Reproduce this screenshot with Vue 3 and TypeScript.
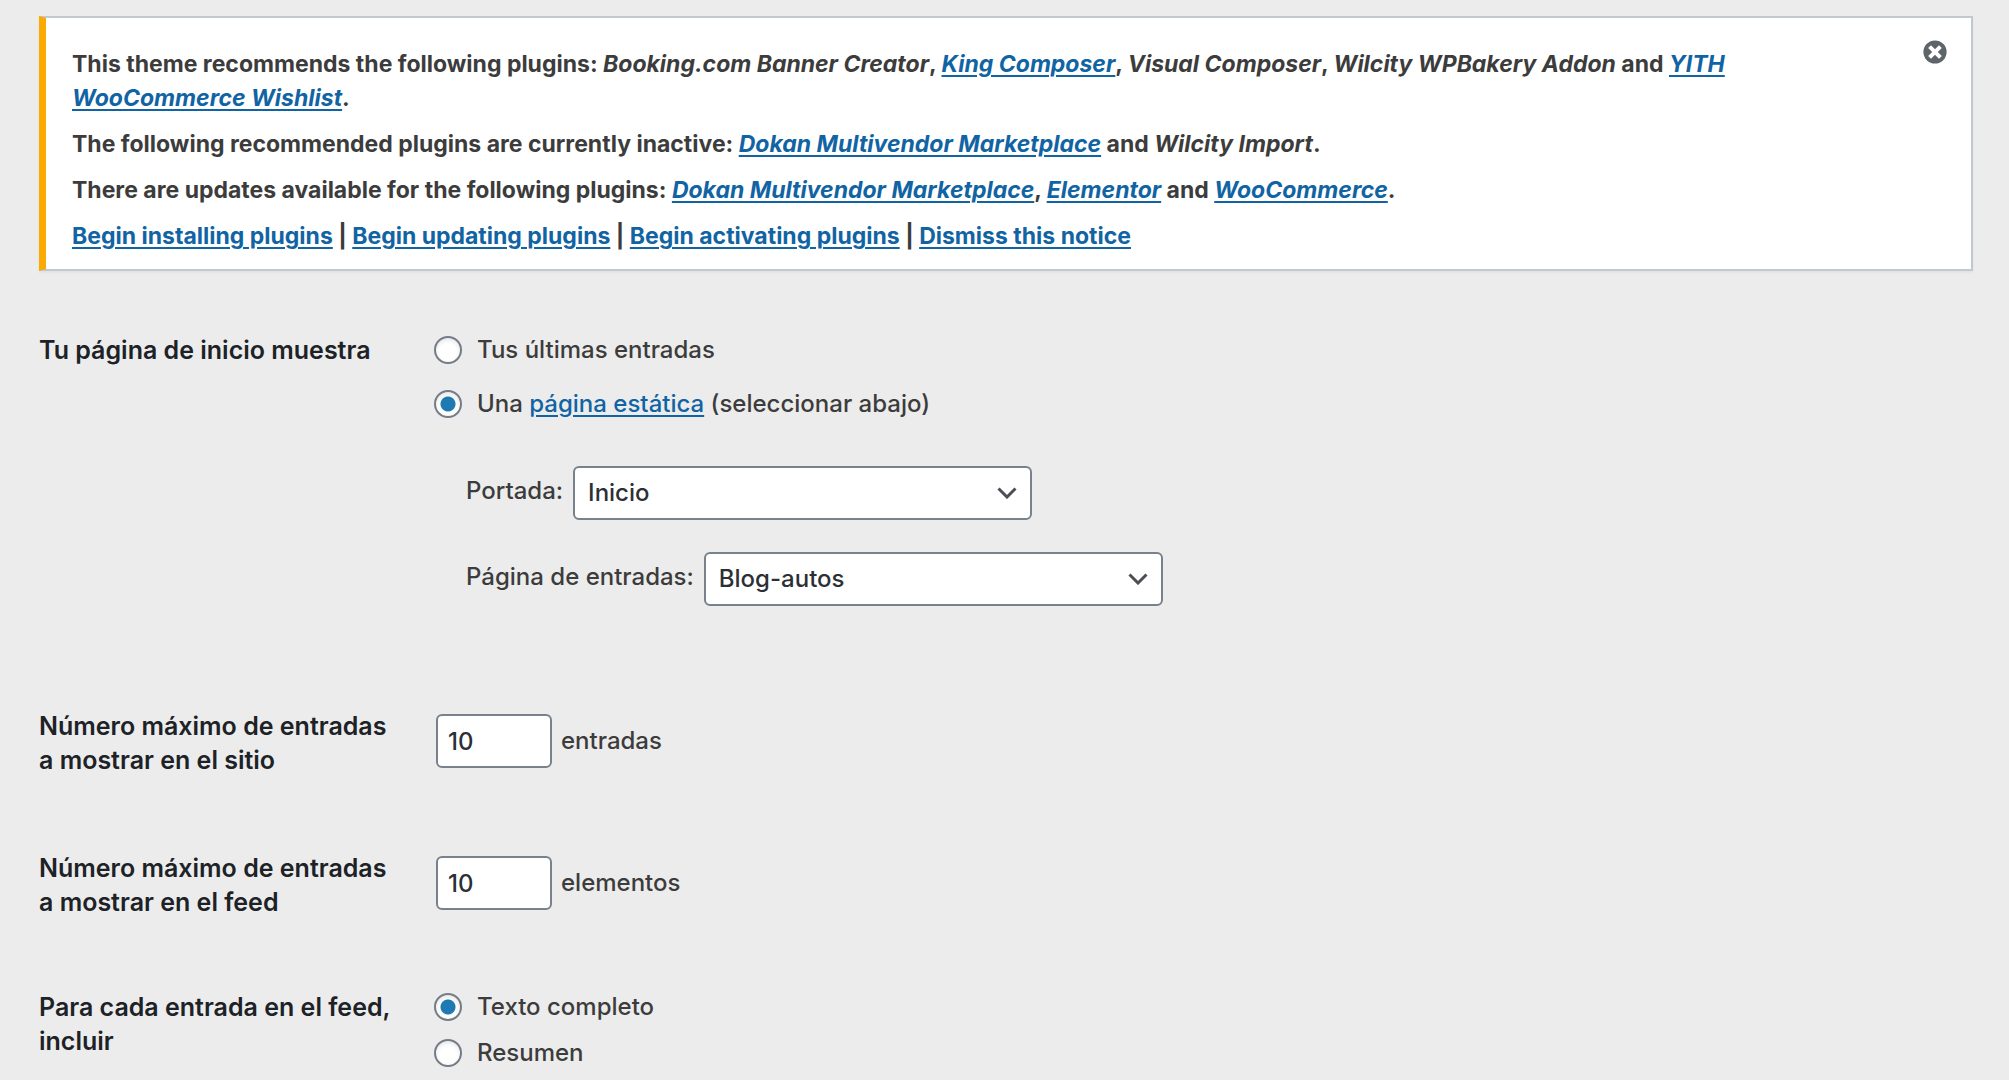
<script setup lang="ts">
import { ref } from 'vue'

const noticeVisible = ref(true)
const showOnFront = ref<'posts' | 'page'>('page')
const frontPage = ref('Inicio')
const postsPage = ref('Blog-autos')
const postsPerPage = ref('10')
const postsPerFeed = ref('10')
const feedContent = ref<'full' | 'excerpt'>('full')
</script>

<template>
  <main class="page">
    <section v-if="noticeVisible" class="notice">
      <div class="notice-text">
        <p>
          This theme recommends the following plugins: <em>Booking.com Banner Creator</em>,
          <em><a href="#">King Composer</a></em>, <em>Visual Composer</em>,
          <em>Wilcity WPBakery Addon</em> and <em><a href="#">YITH WooCommerce Wishlist</a></em>.
        </p>
        <p>
          The following recommended plugins are currently inactive:
          <em><a href="#">Dokan Multivendor Marketplace</a></em> and <em>Wilcity Import</em>.
        </p>
        <p>
          There are updates available for the following plugins:
          <em><a href="#">Dokan Multivendor Marketplace</a></em>,
          <em><a href="#">Elementor</a></em> and <em><a href="#">WooCommerce</a></em>.
        </p>
        <p>
          <a href="#">Begin installing plugins</a> | <a href="#">Begin updating plugins</a> |
          <a href="#">Begin activating plugins</a> | <a href="#">Dismiss this notice</a>
        </p>
      </div>
      <button class="dismiss" type="button" aria-label="Descartar este aviso" @click="noticeVisible = false">
        <svg viewBox="0 0 24 24" width="24" height="24" aria-hidden="true">
          <circle cx="12" cy="12" r="11.6" fill="#5f6469" />
          <path d="M6.600 6.600l10.800 10.800M17.400 6.600l-10.800 10.800" stroke="#fff" stroke-width="4" />
        </svg>
      </button>
    </section>

    <form class="settings" @submit.prevent>
      <div class="row row-home" role="radiogroup" aria-labelledby="home-title">
        <div id="home-title" class="title">Tu página de inicio muestra</div>
        <div class="field">
          <div class="radios spaced">
            <label class="choice">
              <input v-model="showOnFront" type="radio" name="front" value="posts" />
              <span>Tus últimas entradas</span>
            </label>
            <label class="choice">
              <input v-model="showOnFront" type="radio" name="front" value="page" />
              <span>Una <a href="#">página estática</a> (seleccionar abajo)</span>
            </label>
          </div>
          <div class="pages">
            <div class="pick">
              <label for="front-page">Portada:</label>
              <span class="select">
                <select id="front-page" v-model="frontPage">
                  <option>Inicio</option>
                </select>
                <svg viewBox="0 0 20 12" width="20" height="12" aria-hidden="true">
                  <path d="M1.5 1.5L10 10l8.500-8.500" fill="none" stroke="#4b4f54" stroke-width="3" />
                </svg>
              </span>
            </div>
            <div class="pick">
              <label for="posts-page">Página de entradas:</label>
              <span class="select">
                <select id="posts-page" v-model="postsPage">
                  <option>Blog-autos</option>
                </select>
                <svg viewBox="0 0 20 12" width="20" height="12" aria-hidden="true">
                  <path d="M1.5 1.5L10 10l8.500-8.500" fill="none" stroke="#4b4f54" stroke-width="3" />
                </svg>
              </span>
            </div>
          </div>
        </div>
      </div>

      <div class="counts">
        <div class="row">
          <label class="title" for="site-count">Número máximo de entradas a mostrar en el sitio</label>
          <div class="field count">
            <input id="site-count" v-model="postsPerPage" type="text" inputmode="numeric" />
            <span>entradas</span>
          </div>
        </div>

        <div class="row">
          <label class="title" for="feed-count">Número máximo de entradas a mostrar en el feed</label>
          <div class="field count">
            <input id="feed-count" v-model="postsPerFeed" type="text" inputmode="numeric" />
            <span>elementos</span>
          </div>
        </div>
      </div>

      <div class="row" role="radiogroup" aria-labelledby="feed-title">
        <div id="feed-title" class="title">Para cada entrada en el feed, incluir</div>
        <div class="field radios">
          <label class="choice">
            <input v-model="feedContent" type="radio" name="feed" value="full" />
            <span>Texto completo</span>
          </label>
          <label class="choice">
            <input v-model="feedContent" type="radio" name="feed" value="excerpt" />
            <span>Resumen</span>
          </label>
        </div>
      </div>
    </form>
  </main>
</template>

<style>
body {
  margin: 0;
  background: #ececec;
}
</style>

<style scoped>
.page {
  box-sizing: border-box;
  padding: 16px 36px 0 39px;
  font-family: Inter, "Liberation Sans", sans-serif;
  font-size: 24px;
  font-weight: 450;
  line-height: 34px;
  color: #3c3c3c;
}

a {
  color: #1164a3;
  text-decoration: underline;
  text-decoration-thickness: 2px;
  text-underline-offset: 3px;
}

.notice {
  display: flex;
  align-items: flex-start;
  justify-content: space-between;
  padding: 29px 24px 16px 26px;
  background: #fff;
  border: 2px solid #c3c8cd;
  border-left: 7px solid #fbab00;
  box-shadow: 0 2px 2px rgba(0, 0, 0, 0.04);
  font-size: 23px;
  font-weight: 650;
}

.notice-text {
  flex: 1;
  max-width: 1720px;
}

.notice p {
  margin: 0 0 12px;
}

.notice p:last-child {
  margin-bottom: 0;
}

.dismiss {
  display: flex;
  margin: -7px 0 0;
  padding: 0;
  border: 0;
  background: none;
  cursor: pointer;
}

.settings {
  display: flex;
  flex-direction: column;
  margin-top: 62px;
}

.row {
  display: grid;
  grid-template-columns: 355px 1fr;
  column-gap: 40px;
}

.counts {
  display: flex;
  flex-direction: column;
  gap: 74px;
  margin: 103px 0 71px;
}

.title {
  font-size: 25px;
  font-weight: 600;
  color: #1d2227;
}

.choice {
  display: flex;
  align-items: center;
  gap: 15px;
}

.radios {
  display: flex;
  flex-direction: column;
  gap: 12px;
}

.spaced {
  gap: 20px;
}

.choice input {
  appearance: none;
  box-sizing: border-box;
  width: 28px;
  height: 28px;
  margin: 0;
  border: 2px solid #747d87;
  border-radius: 50%;
  background: #fff;
  box-shadow: inset 0 2px 4px rgba(0, 0, 0, 0.1);
}

.choice input:checked {
  background: radial-gradient(circle, #1f7ab4 7px, #fff 8px);
}

.pages {
  display: flex;
  flex-direction: column;
  gap: 32px;
  margin: 45px 0 0 32px;
}

.pick {
  display: flex;
  align-items: center;
  gap: 10px;
}

.pick label {
  padding-bottom: 4px;
}

.select {
  display: grid;
  align-items: center;
  width: 459px;
}

.select select,
.select svg {
  grid-area: 1 / 1;
}

.select svg {
  justify-self: end;
  margin-right: 15px;
  pointer-events: none;
}

select,
.count input {
  appearance: none;
  box-sizing: border-box;
  height: 54px;
  margin: 0;
  border: 2px solid #78828c;
  border-radius: 6px;
  background: #fff;
  color: #2c3036;
  font: inherit;
}

select {
  width: 100%;
  padding: 0 44px 0 13px;
}

.count {
  display: flex;
  align-items: center;
  align-self: start;
  gap: 9px;
  padding: 5px 0 0 2px;
}

.count input {
  width: 116px;
  padding: 0 10px;
}
</style>
